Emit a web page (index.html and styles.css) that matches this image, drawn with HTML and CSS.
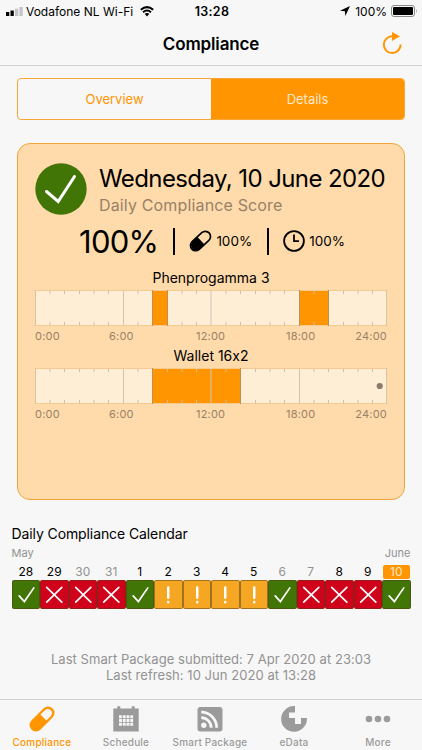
FILE: index.html
```html
<!DOCTYPE html>
<html lang="en">
<head>
    <meta charset="UTF-8">
    <meta name="viewport" content="width=device-width, initial-scale=1.0">
    <title>Compliance</title>
    <link rel="stylesheet" href="styles.css">
</head>
<body>
    <!-- Shared icons -->
    <svg class="icon-defs">
        <symbol id="check" viewBox="0 0 28 28"><path d="M6.5 15.5 L12 21.5 L22 7" /></symbol>
        <symbol id="cross" viewBox="0 0 28 28"><path d="M6 6.500 L22 22 M22 6.500 L6 22" /></symbol>
        <symbol id="warn" viewBox="0 0 28 28"><path d="M14 6.500 V17.500 M14 22 V22.300" /></symbol>
        <symbol id="hours" viewBox="0 0 352 36">
            <path class="tick" d="M15 0V4M29.500 0V4M44.500 0V4M59 0V4M73.500 0V4M103 0V4M117.500 0V4M132.500 0V4M147 0V4M161.500 0V4M191 0V4M205.500 0V4M220.500 0V4M235 0V4M249.500 0V4M279 0V4M293.500 0V4M308.500 0V4M323 0V4M337.500 0V4" />
            <path class="tick" d="M15 32V36M29.500 32V36M44.500 32V36M59 32V36M73.500 32V36M103 32V36M117.500 32V36M132.500 32V36M147 32V36M161.500 32V36M191 32V36M205.500 32V36M220.500 32V36M235 32V36M249.500 32V36M279 32V36M293.500 32V36M308.500 32V36M323 32V36M337.500 32V36" />
            <path class="quarter" d="M88.500 0V36M176 0V36M264.500 0V36" />
            <path class="frame" d="M0 0.500H352M0 35.500H352" />
            <path class="side" d="M0.500 0V36M351.500 0V36" />
        </symbol>
    </svg>

    <div class="status-bar">
        <div class="carrier">
            <svg class="signal" width="17" height="9" viewBox="0 0 17 9">
                <path d="M0 5h3.300v4H0zM4.500 3.500h3.300V9H4.500z" fill="#000" />
                <path d="M9 1.700h3.300V9H9zM13.400 0h3.300v9h-3.300z" fill="#c4c4c6" />
            </svg>
            <span class="carrier-name">Vodafone NL Wi-Fi</span>
            <svg class="wifi" width="14" height="11" viewBox="0 0 14 11">
                <path d="M0.800 3.800 Q7 -1.600 13.200 3.800 M3 6.200 Q7 2.800 11 6.200" fill="none" stroke="#000" stroke-width="2" />
                <path d="M4.600 7.800 Q7 6 9.400 7.800 L7 10.400z" />
            </svg>
        </div>
        <span class="time">13:28</span>
        <div class="power">
            <svg width="10" height="10" viewBox="0 0 10 10"><path d="M10 0 L0 4.800 L4.900 5.200 L5.300 10z" /></svg>
            <span class="power-value">100%</span>
            <svg class="battery" width="27" height="12" viewBox="0 0 27 12">
                <rect x="0.500" y="0.500" width="23" height="11" rx="2.500" fill="none" stroke="#8a8a8c" />
                <rect x="2" y="2" width="20" height="8" rx="1" />
                <path d="M25 4q1.600 2 0 4z" fill="#8a8a8c" />
            </svg>
        </div>
    </div>

    <header class="nav-bar">
        <h1>Compliance</h1>
        <svg class="refresh" width="20" height="23" viewBox="0 0 20 23">
            <path d="M10.500 4.300 A8.400 8.400 0 1 0 18.600 12.500" fill="none" stroke="#ff9500" stroke-width="2" />
            <path d="M10 0 L18 4.200 L10 9z" fill="#ff9500" />
        </svg>
    </header>

    <main>
        <div class="tabs">
            <div class="tab">Overview</div>
            <div class="tab active">Details</div>
        </div>

        <section class="card">
            <div class="card-head">
                <svg class="badge" width="52" height="52" viewBox="0 0 52 52">
                    <circle cx="26" cy="26" r="25.700" fill="#417505" />
                    <path d="M11.500 28.500 L23.200 38.500 L39.500 13.500" fill="none" stroke="#fff" stroke-width="3" stroke-linecap="round" />
                </svg>
                <div class="card-title">
                    <h2>Wednesday, 10 June 2020</h2>
                    <p>Daily Compliance Score</p>
                </div>
            </div>

            <div class="scores">
                <span class="score-main">100%</span>
                <span class="bar"></span>
                <svg class="pill" width="23" height="22" viewBox="0 0 23 22">
                    <g transform="rotate(-43 11.500 11)">
                        <rect x="-0.300" y="5.800" width="23.600" height="10.400" rx="5.200" fill="none" stroke="#000" stroke-width="1.700" />
                        <path d="M12 6H5.300a5 5 0 0 0 0 10H12z" />
                    </g>
                </svg>
                <span class="score">100%</span>
                <span class="bar"></span>
                <svg class="clock" width="22" height="22" viewBox="0 0 22 22">
                    <circle cx="11" cy="11" r="9.900" fill="none" stroke="#000" stroke-width="1.800" />
                    <path d="M11 4.500V11.200H16" fill="none" stroke="#000" stroke-width="1.800" />
                </svg>
                <span class="score">100%</span>
            </div>

            <div class="med">
                <h3>Phenprogamma 3</h3>
                <svg class="timeline" width="352" height="36" viewBox="0 0 352 36">
                    <rect class="track" width="352" height="36" />
                    <path class="window" d="M118 0h15v36h-15zM265 0h29v36h-29z" />
                    <use href="#hours" width="352" height="36" />
                    <path class="edge" d="M117.500 0V36M132.500 0V36M264.500 0V36M293.500 0V36" />
                </svg>
                <div class="labels"><span>0:00</span><span>6:00</span><span>12:00</span><span>18:00</span><span>24:00</span></div>
            </div>

            <div class="med">
                <h3>Wallet 16x2</h3>
                <svg class="timeline" width="352" height="36" viewBox="0 0 352 36">
                    <rect class="track" width="352" height="36" />
                    <path class="window" d="M118 0h88v36h-88z" />
                    <use href="#hours" width="352" height="36" />
                    <path class="edge" d="M117.500 0V36M205.500 0V36" />
                    <circle cx="344.700" cy="18" r="3.100" fill="#8b7c6a" />
                </svg>
                <div class="labels"><span>0:00</span><span>6:00</span><span>12:00</span><span>18:00</span><span>24:00</span></div>
            </div>
        </section>

        <section class="calendar">
            <h4>Daily Compliance Calendar</h4>
            <div class="months"><span>May</span><span>June</span></div>
            <div class="days">
                <div class="day ok"><span>28</span><svg><use href="#check" /></svg></div>
                <div class="day bad"><span>29</span><svg><use href="#cross" /></svg></div>
                <div class="day bad weekend"><span>30</span><svg><use href="#cross" /></svg></div>
                <div class="day bad weekend"><span>31</span><svg><use href="#cross" /></svg></div>
                <div class="day ok"><span>1</span><svg><use href="#check" /></svg></div>
                <div class="day mid"><span>2</span><svg><use href="#warn" /></svg></div>
                <div class="day mid"><span>3</span><svg><use href="#warn" /></svg></div>
                <div class="day mid"><span>4</span><svg><use href="#warn" /></svg></div>
                <div class="day mid"><span>5</span><svg><use href="#warn" /></svg></div>
                <div class="day ok weekend"><span>6</span><svg><use href="#check" /></svg></div>
                <div class="day bad weekend"><span>7</span><svg><use href="#cross" /></svg></div>
                <div class="day bad"><span>8</span><svg><use href="#cross" /></svg></div>
                <div class="day bad"><span>9</span><svg><use href="#cross" /></svg></div>
                <div class="day ok today"><span>10</span><svg><use href="#check" /></svg></div>
            </div>
        </section>

        <div class="sync">
            <p>Last Smart Package submitted: 7 Apr 2020 at 23:03</p>
            <p>Last refresh: 10 Jun 2020 at 13:28</p>
        </div>
    </main>

    <nav class="tab-bar">
        <a class="item active">
            <svg width="28" height="28" viewBox="0 0 28 28">
                <g transform="rotate(-45 14 14)">
                    <rect x="-1" y="7.500" width="30" height="13" rx="6.500" fill="currentColor" />
                    <path d="M16 9.800H22.300a4.200 4.200 0 0 1 0 8.400H16z" fill="#f7f7f7" />
                </g>
            </svg>
            <span>Compliance</span>
        </a>
        <a class="item">
            <svg width="28" height="28" viewBox="0 0 28 28">
                <path d="M1.300 3.500h4V1.200h3V3.500h11.400V1.200h3V3.500h4v23H1.300z" fill="currentColor" />
                <path d="M7 11.700H21.200M7 15.500H21.200M7 19.300H21.200" fill="none" stroke="#f7f7f7" stroke-width="2.900" stroke-dasharray="2.900 0.850" />
            </svg>
            <span>Schedule</span>
        </a>
        <a class="item">
            <svg width="28" height="28" viewBox="0 0 28 28">
                <rect x="1.500" y="2" width="25" height="24.500" rx="3" fill="currentColor" />
                <circle cx="7.800" cy="20.200" r="2.700" fill="#f7f7f7" />
                <path d="M5.200 12.700A10 10 0 0 1 15.200 22.700M5.200 7.200A15.500 15.500 0 0 1 20.700 22.700" fill="none" stroke="#f7f7f7" stroke-width="2.800" />
            </svg>
            <span>Smart Package</span>
        </a>
        <a class="item">
            <svg width="28" height="28" viewBox="0 0 28 28">
                <path d="M15 1.100A12.900 12.900 0 1 0 26.900 13H21V19H15V13H9V7.500H15z" fill="currentColor" />
            </svg>
            <span>eData</span>
        </a>
        <a class="item">
            <svg width="28" height="28" viewBox="0 0 28 28">
                <path d="M5 14h0M14 14h0M23 14h0" stroke="currentColor" stroke-width="6.600" stroke-linecap="round" />
            </svg>
            <span>More</span>
        </a>
    </nav>
</body>
</html>
```
FILE: styles.css
```css
* {
    margin: 0;
    padding: 0;
    box-sizing: border-box;
}

body {
    width: 422px;
    height: 750px;
    display: flex;
    flex-direction: column;
    background-color: #f7f7f7;
    color: #000;
    font-family: Inter, "Liberation Sans", sans-serif;
    overflow: hidden;
}

h1, h2, h3, h4 {
    font-weight: 400;
}

svg {
    display: block;
    flex: none;
}

.icon-defs {
    width: 0;
    height: 0;
}

/* Status bar */
.status-bar {
    height: 22px;
    display: grid;
    grid-template-columns: 1fr auto 1fr;
    align-items: center;
    padding: 0 4px 0 6px;
    font-size: 12px;
    white-space: nowrap;
}

.carrier, .power {
    display: flex;
    align-items: center;
}

.carrier-name {
    margin: 0 7px 0 3px;
}

.time {
    font-size: 12.5px;
    font-weight: 600;
    letter-spacing: 0.3px;
}

.power {
    justify-content: flex-end;
    gap: 5px;
}

.battery {
    margin-left: -1px;
}

/* Title */
.nav-bar {
    height: 44px;
    display: grid;
    grid-template-columns: 1fr auto 1fr;
    align-items: center;
    border-bottom: 1px solid #d2d2d4;
}

.nav-bar h1 {
    grid-column: 2;
    font-size: 17px;
    font-weight: 600;
    letter-spacing: -0.15px;
}

.refresh {
    justify-self: end;
    margin-right: 20px;
}

main {
    flex: 1;
}

/* Overview / Details */
.tabs {
    display: flex;
    height: 42px;
    margin: 12px 17px 0;
    border: 1px solid #f9a63a;
    border-radius: 4px;
    overflow: hidden;
}

.tab {
    flex: 1;
    display: flex;
    align-items: center;
    justify-content: center;
    color: #ff9500;
    font-size: 13px;
}

.tab.active {
    background-color: #ff9500;
    color: #ffe9cc;
}

/* Daily card */
.card {
    height: 357px;
    margin: 23px 17px 0;
    padding: 19px 16px 0 17px;
    background-color: #ffdbab;
    border: 1px solid #f0a53c;
    border-radius: 13px;
}

.card-head {
    display: flex;
    gap: 12px;
}

.card-title {
    white-space: nowrap;
}

.card h2 {
    font-size: 24px;
    line-height: 32px;
    letter-spacing: -0.6px;
}

.card-title p {
    color: #978168;
    font-size: 16px;
    line-height: 20px;
    letter-spacing: 0.15px;
}

.scores {
    display: flex;
    align-items: center;
    height: 40px;
    margin: 6px 0 3px 44px;
}

.score-main {
    font-size: 31px;
    letter-spacing: -0.7px;
}

.bar {
    width: 2px;
    height: 27px;
    background-color: #000;
    margin: 0 14px 0 15px;
}

.score {
    margin-left: 4px;
    font-size: 13.5px;
}

.med {
    width: 352px;
}

.med h3 {
    height: 26px;
    font-size: 14px;
    font-feature-settings: "calt" 0;
    line-height: 28px;
    text-align: center;
}

.tick {
    stroke: #cfc0ac;
}

.quarter {
    stroke: #cfc4ba;
}

.frame {
    stroke: #f2ca92;
}

.side {
    stroke: #dcc3a0;
}

.track {
    fill: #ffeed6;
}

.window {
    fill: #ff9500;
}

.edge {
    stroke: #ba9159;
}

.labels {
    display: grid;
    grid-template-columns: 74px 87px 90px 1fr auto;
    height: 16px;
    padding-top: 3px;
    color: #978168;
    font-size: 11px;
    letter-spacing: 0.2px;
    line-height: 15px;
}

/* Calendar */
.calendar {
    margin: 24px 11.5px 0;
}

.calendar h4 {
    font-size: 14px;
    letter-spacing: -0.1px;
    line-height: 20px;
}

.months {
    display: flex;
    justify-content: space-between;
    color: #929292;
    font-size: 11px;
    line-height: 18px;
}

.days {
    display: grid;
    grid-template-columns: repeat(14, 28.5px);
}

.day {
    display: flex;
    flex-direction: column;
    align-items: center;
    font-size: 12px;
}

.day span {
    width: 27px;
    height: 14px;
    margin: 3px 0 1px;
    line-height: 14px;
    text-align: center;
}

.day svg {
    width: 28.5px;
    height: 29px;
    border: 1px solid rgba(80, 60, 20, 0.5);
    border-radius: 2px;
    fill: none;
    stroke: #fff;
    stroke-width: 1.8;
    stroke-linecap: round;
}

.day.weekend span {
    color: #929292;
}

.day.ok svg {
    background-color: #417505;
}

.day.bad svg {
    background-color: #d0021b;
}

.day.mid svg {
    background-color: #f5a623;
    stroke-width: 2.6;
}

.day.today span {
    background-color: #ff9500;
    border-radius: 2px;
    color: #ffe9cc;
}

.sync {
    margin-top: 42px;
    color: #929292;
    font-size: 13px;
    letter-spacing: 0.05px;
    line-height: 16px;
    text-align: center;
}

/* Bottom tabs */
.tab-bar {
    display: grid;
    grid-template-columns: repeat(5, 84px);
    height: 51px;
    border-top: 1px solid #d2d2d4;
}

.item {
    display: flex;
    flex-direction: column;
    align-items: center;
    gap: 3px;
    padding-top: 5px;
    color: #9b9b9b;
    font-size: 10px;
    font-weight: 500;
    letter-spacing: 0.2px;
    white-space: nowrap;
}

.item.active {
    color: #ff9500;
}
```
